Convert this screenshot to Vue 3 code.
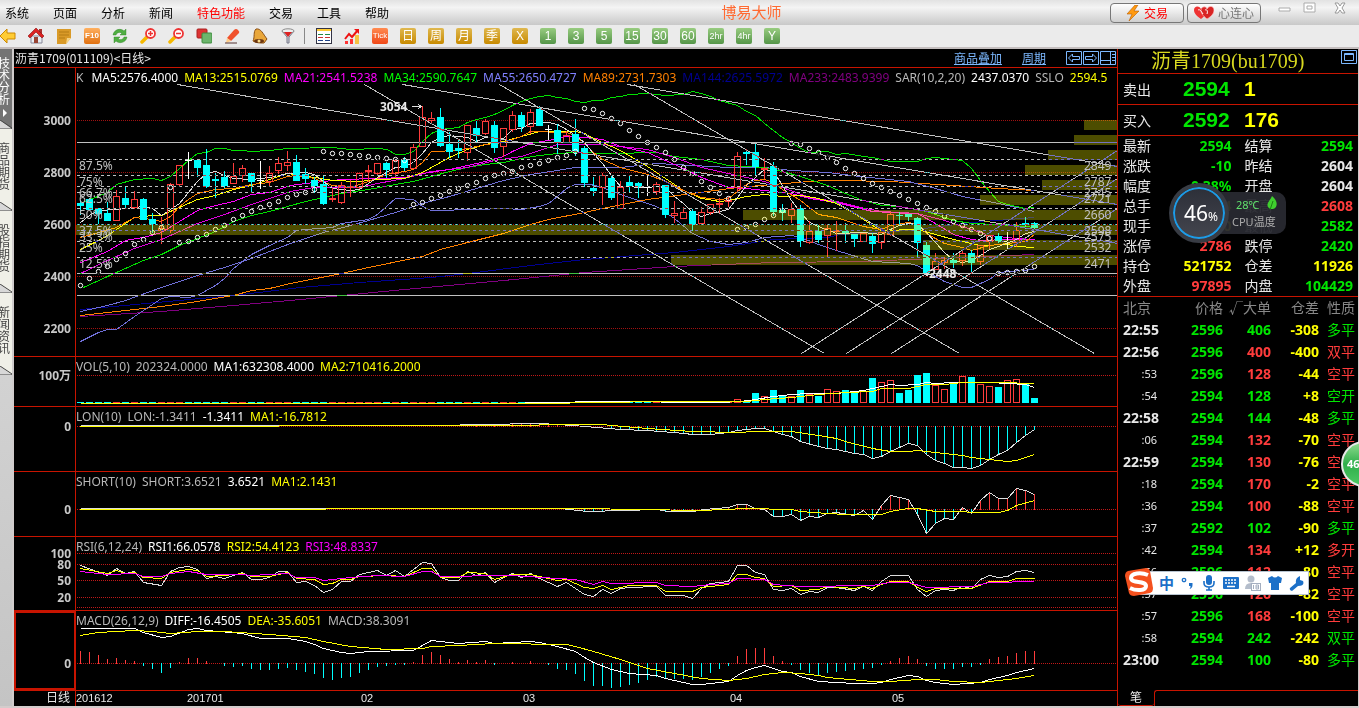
<script setup>
import { ref } from 'vue'

const LEFT = 76
const WIDTH = 1041
const STEP = 9
const xOf = (i) => 80 + i * STEP

const menus = ['系统', '页面', '分析', '新闻', '特色功能', '交易', '工具', '帮助']
const sideTabs = ['技术分析', '商品期货', '股指期货', '新闻资讯']
const activeTab = ref(0)

const periods = [
  { text: 'Tick', kind: 'tick' },
  { text: '日', kind: 'gold' },
  { text: '周', kind: 'gold' },
  { text: '月', kind: 'gold' },
  { text: '季', kind: 'gold' },
  { text: 'X', kind: 'gold' },
  { text: '1', kind: 'green' },
  { text: '3', kind: 'green' },
  { text: '5', kind: 'green' },
  { text: '15', kind: 'green' },
  { text: '30', kind: 'green' },
  { text: '60', kind: 'green' },
  { text: '2hr', kind: 'green hours' },
  { text: '4hr', kind: 'green hours' },
  { text: 'Y', kind: 'green' }
]

const legend = [
  ['K', 'gray'],
  ['MA5:2576.4000', 'white'],
  ['MA13:2515.0769', 'yellow'],
  ['MA21:2541.5238', 'magenta'],
  ['MA34:2590.7647', 'lime'],
  ['MA55:2650.4727', 'violet'],
  ['MA89:2731.7303', 'orange'],
  ['MA144:2625.5972', 'navy'],
  ['MA233:2483.9399', 'purple'],
  ['SAR(10,2,20)', 'gray'],
  ['2437.0370', 'white'],
  ['SSLO', 'gray'],
  ['2594.5', 'yellow']
]

// type, high, body top, body bottom, low
const candles = `c200,203,205,214 c198,199,209,209 c208,208,213,223 c202,213,220,220 r190,196,220,220 c187,198,204,208
r191,199,207,208 c198,199,219,219 c213,219,223,232 r217,228,230,243 r183,184,230,232 r165,165,184,186
w152,160,160,178 c160,160,167,176 c149,165,186,187 c173,179,180,197 c171,177,185,187 r163,176,183,183
r165,168,175,181 c173,173,181,192 w161,180,180,188 r166,173,181,186 r157,163,170,173 r151,162,165,170
c155,162,180,180 c168,174,178,183 c177,180,185,192 c176,184,203,204 r188,198,199,201 r182,185,202,203
r180,186,187,196 r173,173,187,188 r165,170,171,181 r163,163,173,175 c162,163,169,177 r160,160,173,177
c157,160,167,170 r144,147,168,168 r106,117,146,146 r112,118,120,123 c108,117,145,146 c132,144,151,157
c139,148,150,157 r125,125,152,160 c121,128,135,141 r119,121,133,134 c121,125,147,152 r128,128,146,156
r111,115,129,131 c112,115,126,131 r109,112,126,133 c106,109,125,125 w125,129,129,139 c124,130,142,153
r131,135,142,142 c119,134,151,155 c146,148,182,186 c177,188,190,195 r173,175,187,204 c176,178,197,199
r181,187,208,208 c175,182,185,191 c182,183,186,197 w176,187,187,195 r182,184,191,194 c185,185,214,217
r201,213,215,222 r207,212,218,218 c209,211,224,230 r207,212,223,223 r204,204,212,214 r198,203,204,212
r197,200,201,206 r152,156,187,192 c149,152,153,164 c144,152,166,174 r158,168,169,178 c162,166,211,215
c204,210,212,220 r203,209,215,222 c205,208,240,246 r221,231,242,243 c225,231,239,242 r224,228,235,257
r221,230,231,250 c223,231,232,242 c234,234,238,246 r233,233,241,241 c233,236,243,252 r232,232,242,248
r212,214,234,235 c212,215,215,223 c214,214,216,220 c217,218,242,256 c242,245,272,273 r253,261,269,269
r257,260,262,268 c253,260,262,267 r249,253,260,265 c250,253,262,273 r245,245,261,264 r235,235,241,248
c233,236,241,242 w232,241,241,249 r222,230,242,246 c217,223,224,228 c222,223,227,229`
  .split(/\s+/)
  .map((s, i) => {
    const [high, top, bottom, low] = s.slice(1).split(',').map(Number)
    return { x: xOf(i), type: s[0], high, top, bottom, low }
  })

const sar = [
  285, 278, 271, 266, 259, 253, 244, 239, 232, 227, 187, 242, 241, 237, 234, 229, 225, 219, 215, 211,
  207, 204, 201, 197, 194, 192, 189, 151, 153, 153, 154, 155, 156, 157, 158, 159, 160, 204, 202, 198,
  195, 191, 188, 185, 182, 178, 175, 173, 171, 167, 165, 163, 160, 157, 155, 151, 108, 109, 113, 118,
  123, 130, 136, 142, 147, 152, 159, 167, 173, 181, 187, 193, 198, 229, 227, 224, 219, 215, 210, 143,
  144, 148, 152, 157, 162, 168, 173, 178, 183, 187, 191, 195, 199, 203, 207, 211, 216, 221, 225, 229,
  233, 238, 273, 272, 271, 270, 266
]

const averages = [
  { color: '#800080', points: '80,316 161,311 233,305 300,299 404,289 503,280 584,272 674,266 773,262 860,261 1034,254' },
  { color: '#000090', points: '80,309 233,295 300,287 359,282 431,277 476,272 530,265 584,259 674,252 728,246 773,239 827,237 840,234 908,230 971,222 1034,217' },
  { color: '#ff8000', points: '80,315 161,306 197,301 233,295 251,290 269,288 290,283 341,273 368,267 422,256 440,249 467,242 503,233 530,224 548,219 584,212 602,208 647,199 692,193 737,187 773,184 809,181 827,180 840,180 890,181 953,185 998,188 1034,190' },
  { color: '#7070d8', points: '80,311 107,305 125,300 161,287 197,275 224,267 251,258 290,243 323,232 350,225 368,220 395,212 422,203 449,196 476,188 503,180 530,174 557,170 575,167 620,167 656,163 674,164 728,167 764,167 791,170 827,172 860,176 908,181 935,188 962,196 998,203 1034,211' },
  { color: '#7070d8', points: '80,341 98,332 107,329 116,329 134,316 161,298 170,296 188,297 197,295 206,290 215,285 224,278 233,268 251,254 269,245 287,237 296,230 305,229 332,227 341,223 368,219 377,214 395,198 413,199 422,206 431,210 449,210 458,209 476,209 503,208 521,209 539,206 548,203 557,196 566,188 575,184 590,184 602,187 620,194 656,206 674,218 692,233 710,241 728,244 746,242 764,237 791,235 800,237 818,244 836,250 872,261 908,263 917,265 926,271 944,281 962,287 971,287 989,279 998,272 1034,269' },
  { color: '#00e000', points: '80,203 107,192 116,184 134,179 152,178 161,180 170,176 179,168 188,160 197,153 206,152 215,148 224,148 233,150 242,150 251,151 269,150 287,148 332,147 350,149 377,148 387,149 395,154 404,154 413,151 422,141 431,133 440,129 458,127 467,122 476,119 485,117 494,114 503,110 512,105 521,101 530,98 539,96 548,95 557,97 566,98 575,101 584,102 593,100 602,100 611,97 620,96 629,94 647,93 665,95 683,94 692,91 701,93 710,96 719,100 737,105 746,111 755,115 764,123 773,130 782,137 791,142 800,148 809,152 827,151 836,154 845,153 863,156 872,157 890,161 917,161 926,158 935,157 953,159 962,160 971,168 980,180 989,191 998,201 1007,204 1016,206 1025,208 1034,207' },
  { color: '#00e000', points: '83,287 107,276 125,268 143,260 161,254 179,245 197,238 215,231 233,221 251,215 269,211 287,206 305,201 323,197 341,193 368,189 395,184 413,181 431,176 449,171 467,167 485,164 503,162 521,158 539,155 557,153 575,152 611,153 656,152 674,156 701,159 728,165 746,166 764,167 782,171 800,176 827,185 845,193 860,199 881,205 899,206 926,211 953,220 971,223 998,224 1025,226 1034,227' },
  { color: '#e000e0', points: '80,273 107,260 134,248 161,239 179,231 197,223 224,214 251,204 269,198 290,191 314,187 359,187 377,183 404,178 431,171 467,167 494,160 521,156 539,150 557,144 602,144 647,149 674,157 701,167 728,173 746,177 764,181 782,187 809,197 836,201 860,207 881,211 917,213 944,220 971,229 989,235 1016,238 1034,239' },
  { color: '#ff00ff', points: '80,262 107,251 125,240 143,237 161,232 179,221 197,210 215,205 233,201 251,194 269,192 290,185 314,182 341,179 377,178 404,177 422,173 449,169 467,165 485,161 503,156 512,151 530,143 548,140 566,136 584,137 602,139 620,146 647,152 665,160 683,168 701,177 728,187 746,188 773,191 791,193 809,198 836,202 872,211 908,213 917,213 935,223 953,234 971,239 980,240 1007,239 1034,239' },
  { color: '#ffff00', points: '80,249 98,240 107,235 125,223 134,217 152,215 161,215 179,207 197,199 215,195 233,189 251,185 269,179 287,173 314,177 332,180 359,181 377,179 404,178 422,172 431,167 449,157 467,149 485,144 503,141 521,136 539,131 575,131 584,133 593,138 602,142 620,150 647,166 665,178 683,190 701,198 719,201 728,200 746,196 764,194 782,196 800,195 818,198 836,203 854,213 872,225 881,230 917,229 935,234 953,239 971,243 980,245 1007,244 1016,246 1034,247' },
  { color: '#ff8000', points: '80,237 98,232 116,227 134,217 152,219 161,221 170,216 179,206 188,199 197,193 215,189 233,188 251,184 269,182 287,176 296,175 314,178 332,185 350,187 368,181 386,174 404,171 413,169 422,162 431,151 458,150 467,148 485,144 503,142 521,136 530,131 566,132 575,135 584,143 593,152 602,159 620,167 647,174 665,181 683,190 701,197 719,199 728,198 737,191 746,184 755,180 764,179 773,182 782,189 800,200 818,214 836,217 863,226 881,229 890,225 908,222 917,224 926,233 944,243 962,247 971,250 989,245 1007,243 1025,241 1034,234' },
  { color: '#dddddd', points: '80,222 89,215 98,210 116,209 134,207 143,206 152,208 161,215 170,209 179,203 188,192 197,181 206,173 215,171 224,175 233,178 251,179 269,177 287,173 305,172 314,174 323,181 332,188 341,189 350,190 359,189 368,183 377,177 386,172 395,167 404,166 413,162 422,153 431,142 440,137 449,135 467,137 476,141 485,137 503,138 512,129 521,128 530,123 548,122 557,124 566,129 575,135 584,142 593,153 602,163 611,175 620,186 647,187 656,186 665,187 674,196 683,203 692,212 701,216 710,213 728,209 737,197 746,185 755,177 764,169 773,171 782,185 791,200 800,212 809,222 818,226 836,233 863,232 881,234 890,229 899,225 908,223 917,224 926,232 935,242 944,252 953,260 962,262 971,260 980,255 989,249 998,246 1016,239 1025,233 1034,231' }
]

// volume-by-price bands: left edge, top
const bands = [
  [1084, 120], [1074, 135], [1048, 150], [1025, 165], [1042, 180],
  [980, 195], [743, 210], [76, 225], [923, 240], [671, 255]
]

const levels = [
  [159, '87.5%', '2849'],
  [175, '75%', '2787'],
  [186, '66.7%', '2745'],
  [192, '62.5%', '2721'],
  [208, '50%', '2660'],
  [224, '37.5%', '2598'],
  [230, '33.3%', '2575'],
  [241, '25%', '2532'],
  [257, '12.5%', '2471']
]

const trendLines = [
  [177, 84, 1117, 243], [402, 84, 1117, 204], [627, 84, 1117, 166],
  [364, 84, 824, 353], [499, 84, 959, 353], [634, 84, 1094, 353],
  [801, 353, 1117, 150], [846, 353, 1117, 178], [891, 353, 1117, 208]
]

const priceTicks = [3000, 2800, 2600, 2400, 2200].map((v, i) => ({ text: v, y: 120 + i * 52 }))

const toPairs = (points) => points.split(' ').map((p) => p.split(',').map(Number))

function yAt(pairs, x) {
  const k = pairs.findIndex((p) => p[0] >= x)
  if (k <= 0) return pairs[0][1]
  const [x0, y0] = pairs[k - 1]
  const [x1, y1] = pairs[k]
  return Math.round(y0 + ((y1 - y0) * (x - x0)) / (x1 - x0))
}

function sticks(points, zero) {
  const pairs = toPairs(points)
  return candles
    .map(({ x }) => ({ x, y: yAt(pairs, x), zero }))
    .filter((s) => Math.abs(s.y - zero) > 1)
}

const volumeTops = [
  399, 401, 393, 396, 390, 395, 396, 390, 394, 396, 389, 391, 390, 392, 391, 378, 382,
  380, 393, 390, 375, 373, 385, 389, 383, 376, 377, 384, 386, 387, 380, 379, 384, 398
]
const volumeBars = candles.map((c, i) => ({
  x: c.x,
  up: i === 103 || c.type === 'r',
  top: i < 73 ? 402 : volumeTops[i - 73]
}))

const lon = '80,425 440,425 480,424 540,423 573,425 620,429 647,430 673,432 693,434 710,434 728,432 737,430 755,428 764,428 773,431 782,434 791,436 800,441 818,446 827,448 836,449 854,453 863,454 872,458 881,456 890,451 908,443 917,445 926,454 935,460 944,463 953,467 962,467 971,468 980,465 989,459 998,454 1007,450 1016,442 1025,435 1034,429'
const short = '80,508 560,508 587,511 657,509 667,511 693,511 703,509 728,507 737,504 746,504 755,508 764,509 773,516 782,516 791,514 800,520 809,516 818,517 827,513 836,512 854,515 863,510 872,519 881,505 890,495 908,499 917,514 926,533 935,523 944,518 953,519 962,507 971,513 980,500 989,492 998,498 1007,498 1016,488 1025,490 1034,494'

const macdBars = [
  12, 11, 8, 4, 5, 3, 2, -2, -5, -9, -4, 1, 5, 5, 2, 0, -2, -3, -2, -5, -6, -6, -5, -4, -6, -8, -10,
  -14, -16, -14, -13, -9, -6, -3, -2, -1, -1, 1, 8, 11, 8, 4, 1, 3, 1, 3, -1, 0, 1, 0, 2, 0, -1, -5,
  -6, -10, -17, -22, -22, -24, -23, -21, -19, -16, -13, -15, -15, -15, -16, -13, -9, -5, -2, 7, 14,
  15, 15, 7, 2, -1, -6, -9, -11, -9, -8, -7, -6, -5, -4, -1, 2, 5, 7, 4, -2, -5, -5, -5, -3, -3, -1,
  4, 6, 7, 10, 12, 12
]

const panes = [
  {
    name: 'VOL',
    top: 357,
    height: 49,
    legend: [['VOL(5,10)', 'gray'], ['202324.0000', 'gray'], ['MA1:632308.4000', 'white'], ['MA2:710416.2000', 'yellow']],
    ticks: [{ text: '100万', y: 375 }],
    grid: [375],
    bars: volumeBars,
    sticks: [],
    lines: [
      { color: '#fff', points: '80,403 500,403 600,401 720,402 740,401 755,399 773,396 791,394 809,393 836,393 863,390 881,386 890,384 899,385 917,384 926,382 935,383 953,382 989,382 1007,383 1025,384 1034,387' },
      { color: '#ff0', points: '80,403 540,403 660,401 746,401 764,399 791,397 818,394 845,392 872,391 881,388 908,388 926,384 944,384 962,382 998,382 1034,383' }
    ]
  },
  {
    name: 'LON',
    top: 407,
    height: 64,
    legend: [['LON(10)', 'gray'], ['LON:-1.3411', 'gray'], ['-1.3411', 'white'], ['MA1:-16.7812', 'yellow']],
    ticks: [{ text: '0', y: 426 }],
    grid: [426],
    bars: [],
    sticks: sticks(lon, 426),
    lines: [
      { color: '#ddd', points: lon },
      { color: '#ff0', points: '80,426 480,425 600,424 647,428 692,431 737,432 755,431 791,431 818,435 836,438 845,441 872,448 890,451 908,451 917,450 935,452 962,455 971,457 998,460 1007,461 1016,460 1034,454' }
    ]
  },
  {
    name: 'SHORT',
    top: 472,
    height: 64,
    legend: [['SHORT(10)', 'gray'], ['SHORT:3.6521', 'gray'], ['3.6521', 'white'], ['MA1:2.1431', 'yellow']],
    ticks: [{ text: '0', y: 509 }],
    grid: [509],
    bars: [],
    sticks: sticks(short, 509),
    lines: [
      { color: '#ddd', points: short },
      { color: '#ff0', points: '80,509 580,508 700,510 746,508 791,509 800,511 827,513 845,514 881,514 890,511 908,508 917,508 935,511 962,511 971,512 998,512 1007,510 1016,505 1034,500' }
    ]
  },
  {
    name: 'RSI',
    top: 537,
    height: 73,
    legend: [['RSI(6,12,24)', 'gray'], ['RSI1:66.0578', 'white'], ['RSI2:54.4123', 'yellow'], ['RSI3:48.8337', 'magenta']],
    ticks: [{ text: '100', y: 553 }, { text: '80', y: 564 }, { text: '50', y: 580 }, { text: '20', y: 597 }],
    grid: [553, 564, 580, 597, 607],
    bars: [],
    sticks: [],
    lines: [
      { color: '#ddd', points: '80,565 107,575 116,568 125,573 134,571 143,582 161,585 170,571 179,567 188,566 197,569 206,578 215,576 224,578 242,572 251,579 260,579 269,577 278,571 287,571 296,582 305,581 314,585 323,592 332,589 341,581 350,581 359,574 377,570 386,575 395,570 404,576 413,569 422,562 431,563 440,577 449,580 458,580 467,571 476,575 485,572 494,582 503,577 512,573 521,577 530,573 539,578 557,586 566,582 575,588 584,594 593,596 602,589 611,593 620,588 629,587 656,586 665,595 683,595 692,598 701,588 710,583 728,581 737,565 746,565 755,572 764,574 773,589 782,590 791,588 800,594 809,591 818,592 827,587 836,587 854,590 863,586 872,590 881,581 890,575 908,575 917,589 926,596 935,590 944,589 953,590 962,586 971,588 980,579 989,575 998,577 1007,576 1016,571 1025,570 1034,572' },
      { color: '#ff0', points: '80,568 107,573 116,570 125,573 134,572 143,577 161,578 170,572 188,569 197,570 206,576 224,575 242,573 251,576 269,576 287,572 296,578 314,579 323,584 332,583 341,579 350,579 359,576 386,575 404,576 422,568 431,568 440,577 458,577 467,572 485,573 494,579 512,574 530,574 557,580 566,579 584,587 593,588 602,585 611,589 629,585 656,585 665,591 692,591 701,587 728,584 737,574 746,574 755,577 764,578 773,586 791,585 800,590 818,589 827,586 854,588 863,586 872,588 881,584 890,581 908,581 917,587 926,591 935,588 971,588 989,581 1007,581 1016,578 1034,578' },
      { color: '#f0f', points: '80,571 107,574 134,573 143,576 161,576 170,573 188,571 206,574 242,574 251,575 287,573 296,577 314,577 323,580 350,577 377,575 404,576 422,571 431,571 440,576 458,576 485,575 512,575 557,578 575,579 593,584 602,581 611,583 656,582 665,585 692,586 710,584 728,583 737,578 764,579 773,584 800,586 872,585 890,582 908,582 926,587 971,586 989,582 1034,581' }
    ]
  },
  {
    name: 'MACD',
    top: 611,
    height: 79,
    selected: true,
    legend: [['MACD(26,12,9)', 'gray'], ['DIFF:-16.4505', 'white'], ['DEA:-35.6051', 'yellow'], ['MACD:38.3091', 'gray']],
    ticks: [{ text: '0', y: 663 }],
    grid: [663],
    bars: [],
    sticks: macdBars.map((v, i) => ({ x: xOf(i), y: 663 - v, zero: 663 })).filter((s) => s.y !== 663),
    lines: [
      { color: '#fff', points: '80,628 134,628 143,632 161,637 170,636 188,629 197,628 206,630 242,633 260,638 287,638 305,641 314,644 323,648 341,652 350,653 368,651 413,650 422,645 431,640 440,641 458,643 485,641 494,643 530,641 539,642 557,646 575,651 584,657 593,662 611,669 629,673 656,675 665,678 692,684 701,684 728,681 737,675 746,670 755,667 764,665 773,668 782,671 791,672 800,676 818,681 854,683 872,683 881,682 890,679 908,675 917,676 926,680 935,682 953,684 980,682 989,679 1007,675 1016,672 1034,668' },
      { color: '#ff0', points: '80,635 98,632 134,630 152,631 170,633 197,631 224,631 269,634 305,637 323,641 350,646 386,649 422,648 431,646 458,645 494,643 566,644 575,646 593,651 620,659 647,668 674,673 701,678 728,680 746,678 764,674 782,672 800,673 818,675 827,677 872,681 890,681 917,679 935,679 953,681 980,682 1016,678 1034,675' }
    ]
  }
]

const months = [
  { text: '201612', x: 76 },
  { text: '201701', x: 187 },
  { text: '02', x: 361 },
  { text: '03', x: 523 },
  { text: '04', x: 730 },
  { text: '05', x: 892 }
]

const quotes = [
  ['最新', '2594', 'green', '结算', '2594', 'green'],
  ['涨跌', '-10', 'green', '昨结', '2604', 'plain'],
  ['幅度', '-0.38%', 'green', '开盘', '2604', 'plain'],
  ['总手', '202324', 'yellow', '最高', '2608', 'red'],
  ['现手', '100', 'yellow', '最低', '2582', 'green'],
  ['涨停', '2786', 'red', '跌停', '2420', 'green'],
  ['持仓', '521752', 'yellow', '仓差', '11926', 'yellow'],
  ['外盘', '97895', 'red', '内盘', '104429', 'green']
]

const trades = [
  ['22:55', '2596', '406', '-308', '多平', 'green'],
  ['22:56', '2596', '400', '-400', '双平', 'red'],
  [':53', '2596', '128', '-44', '空平', 'red'],
  [':54', '2594', '128', '+8', '空开', 'green'],
  ['22:58', '2594', '144', '-48', '多平', 'green'],
  [':06', '2594', '132', '-70', '空平', 'red'],
  ['22:59', '2594', '130', '-76', '空平', 'red'],
  [':18', '2594', '170', '-2', '空平', 'red'],
  [':36', '2594', '100', '-88', '空平', 'red'],
  [':37', '2592', '102', '-90', '多平', 'green'],
  [':42', '2594', '134', '+12', '多开', 'red'],
  [':56', '2596', '112', '-80', '空平', 'red'],
  [':57', '2596', '126', '-82', '空平', 'red'],
  [':57', '2596', '168', '-100', '空平', 'red'],
  [':58', '2594', '242', '-242', '双平', 'green'],
  ['23:00', '2594', '100', '-80', '多平', 'green']
]

const topStyle = (y, top, height) => ({ top: ((y - top) / height) * 100 + '%' })
const leftStyle = (x) => ({ left: ((x - LEFT) / WIDTH) * 100 + '%' })
</script>

<template>
  <div class="app">
    <header class="menubar">
      <nav class="menu">
        <button v-for="m in menus" :key="m" type="button" :class="{ hot: m === '特色功能' }">{{ m }}</button>
      </nav>
      <h1>博易大师</h1>
      <div class="actions">
        <button type="button" class="pill trade">
          <svg width="14" height="16" viewBox="0 0 14 16"><path d="M9 0 1 9h5L3 16 13 6H8l4-6z" fill="#ff9a10" stroke="#b85c00" stroke-width=".6" /></svg>
          交易
        </button>
        <button type="button" class="pill heart">
          <svg width="20" height="14" viewBox="0 0 20 14">
            <path d="M7 13C1 9 0 6 0 4c0-4 5-5 7-1 2-3 5-2 6 0-1 5-3 8-6 10z" fill="#e33" />
            <path d="M13 13C8 9 7 7 7 4c1-4 5-4 6-1 2-4 7-3 7 1 0 3-2 6-7 9z" fill="#d82424" stroke="#fbb" stroke-width=".7" />
            <path d="M4 4c2-1 3 1 5 4M11 4c2-1 3 1 2 4" fill="none" stroke="#fff" />
          </svg>
          心连心
        </button>
      </div>
      <div class="window-controls">
        <button type="button" aria-label="最小化"><svg width="16" height="16" viewBox="0 0 16 16"><path d="M3 8h11v3H3z" fill="#fff" stroke="#aaa" /></svg></button>
        <button type="button" aria-label="最大化"><svg width="16" height="16" viewBox="0 0 16 16"><path d="M3 3h11v9H3zM6 6h5v3H6z" fill="#fff" stroke="#aaa" /></svg></button>
        <button type="button" aria-label="关闭" class="close"><svg width="16" height="16" viewBox="0 0 16 16"><path d="M3 3h3l2 3 2-3h3l-3 5 3 5h-3l-2-3-2 3H3l3-5z" fill="#fff" stroke="#999" /></svg></button>
      </div>
    </header>

    <div class="toolbar">
      <button type="button" aria-label="后退"><svg viewBox="0 0 16 16"><path d="M0 8 7 1v4h8v6H7v4z" fill="#fc3" stroke="#c80" /></svg></button>
      <button type="button" aria-label="首页"><svg viewBox="0 0 16 16"><path d="M3 8h11v7H3z" fill="#e8eef4" stroke="#889" /><path d="M11 1h3v5h-3z" fill="#a33" /><path d="M0 8 8 0l8 8-2 2-6-6-6 6z" fill="#d22" stroke="#811" stroke-width=".6" /><path d="M6 9h4v6H6z" fill="#943" /></svg></button>
      <button type="button" aria-label="记事"><svg viewBox="0 0 16 16"><path d="M1 1h14v9l-5 6H1z" fill="#d99a28" /><path d="M3 4h10M3 7h10M3 10h6" stroke="#b57c14" /><path d="m10 16 1-6h4z" fill="#f6d588" /></svg></button>
      <button type="button" class="f10">F10</button>
      <button type="button" aria-label="刷新"><svg viewBox="0 0 16 16"><path d="M1 7c1-6 8-7 11-4l2-2v6H8l2-2C8 4 5 4 4 7zM15 9c-1 6-8 7-11 4l-2 2V9h6l-2 2c2 1 5 1 6-2z" fill="#4fae42" stroke="#2b7d22" stroke-width=".4" /></svg></button>
      <button type="button" aria-label="放大"><svg viewBox="0 0 16 16"><path d="m7 9-5 5" stroke="#f5b800" stroke-width="3.500" stroke-linecap="round" /><circle cx="10.500" cy="5.500" r="4.500" fill="#fff" stroke="#e33" stroke-width="1.800" /><path d="M8 5.500h5M10.500 3v5" stroke="#e33" stroke-width="1.500" /></svg></button>
      <button type="button" aria-label="缩小"><svg viewBox="0 0 16 16"><path d="m7 9-5 5" stroke="#f5b800" stroke-width="3.500" stroke-linecap="round" /><circle cx="10.500" cy="5.500" r="4.500" fill="#fff" stroke="#e33" stroke-width="1.800" /><path d="M8 5.500h5" stroke="#e33" stroke-width="1.500" /></svg></button>
      <button type="button" aria-label="叠加"><svg viewBox="0 0 16 16"><rect x="1" y="1" width="10" height="9" rx="1" fill="#d33" stroke="#a22" /><rect x="6" y="5" width="10" height="10" rx="1" fill="#6cb56c" stroke="#3f8a3f" /></svg></button>
      <button type="button" aria-label="画线"><svg viewBox="0 0 16 16"><path d="M3 10 10 2q2-2 4 0t1 3l-8 8z" fill="#f0512c" /><path d="m3 10 4 3-5 2z" fill="#fc8" /><path d="M1 15h12" stroke="#533" /></svg></button>
      <button type="button" aria-label="预警"><svg viewBox="0 0 16 16"><path d="M4 1c5-1 7 5 11 10l-3 4C8 15 4 15 1 13c2-4 0-9 3-12z" fill="#e9a73b" stroke="#8a4d10" /><ellipse cx="7" cy="13" rx="5" ry="2" fill="#6b3510" /><circle cx="7" cy="13" r="1.500" fill="#fd8" /></svg></button>
      <button type="button" aria-label="筛选" class="last"><svg viewBox="0 0 16 16"><path d="M2 3h12L9 9v6H7V9z" fill="#ccd3d8" stroke="#778" /><ellipse cx="8" cy="3" rx="6" ry="2.200" fill="#eee" stroke="#888" /><path d="M4 4h8L8 9z" fill="#d22" /></svg></button>
      <button type="button" aria-label="报价" class="after-rule"><svg viewBox="0 0 16 16"><rect x=".5" y=".5" width="15" height="15" fill="#fff" stroke="#334" /><path d="M1 2h14" stroke="#fc3" stroke-width="2" /><path d="M2 6.500h5M9 6.500h5" stroke="#284" /><path d="M2 9.500h5M9 9.500h5" stroke="#c33" /><path d="M2 12.500h5M9 12.500h5" stroke="#248" /></svg></button>
      <button type="button" aria-label="走势"><svg viewBox="0 0 16 16"><path d="M1 13h3v3H1zM6 11h3v5H6z" fill="#f33" /><path d="M11 7h4v9h-4z" fill="#f5c242" /><path d="m1 11 4-5 3 3 6-7" fill="none" stroke="#e11" stroke-width="2" /><path d="M10 1h5v5z" fill="#e11" /></svg></button>
      <button v-for="p in periods" :key="p.text" type="button" class="period" :class="p.kind"><span>{{ p.text }}</span></button>
    </div>

    <div class="body">
      <aside class="side-tabs">
        <button
          v-for="(t, i) in sideTabs"
          :key="t"
          type="button"
          :class="{ active: i === activeTab }"
          @click="activeTab = i"
        >
          <span>{{ t }}</span>
          <svg v-if="i === activeTab" class="arrow" width="4" height="8" viewBox="0 0 4 8"><path d="M0 0v8l4-4z" fill="#fff" /></svg>
          <svg class="notch" width="12" height="9" viewBox="0 0 12 9"><path d="M0 0v9h12z" fill="#d8d8d8" /><path d="m0 0 12 8v1H0" fill="none" stroke="#444" /></svg>
        </button>
      </aside>

      <main class="charts">
        <div class="chart-title">
          <h2>沥青1709(011109)&lt;日线&gt;</h2>
          <div class="chart-links">
            <a href="#overlay">商品叠加</a>
            <a href="#period">周期</a>
            <span class="arrows">
              <button type="button" aria-label="上一个"><svg viewBox="0 0 16 14"><path d="M.5 .5h15v13H.5zM2.500 7l4-4v2.500h7v3h-7V11z" /></svg></button>
              <button type="button" aria-label="下一个"><svg viewBox="0 0 16 14"><path d="M.5 .5h15v13H.5zM13.500 7l-4-4v2.500h-7v3h7V11z" /></svg></button>
              <button type="button" aria-label="布局"><svg viewBox="0 0 16 14"><path d="M.5 .5h15v13H.5zM.5 9.500h10M10.500 .5v13M12 3.500h3M12 6.500h3M12 9.500h3" /></svg></button>
            </span>
          </div>
        </div>

        <section class="pane">
          <div class="axis">
            <span v-for="t in priceTicks" :key="t.text" :style="topStyle(t.y, 68, 288)">{{ t.text }}</span>
          </div>
          <div class="plot">
            <svg class="drawing" :viewBox="`${LEFT} 68 ${WIDTH} 288`" preserveAspectRatio="xMinYMin meet" shape-rendering="crispEdges">
              <line v-for="t in priceTicks" :key="t.y" x1="77" x2="1116" :y1="t.y + 0.5" :y2="t.y + 0.5" stroke="#a01010" stroke-dasharray="1 1" />
              <g transform="translate(0.5 0.5)" fill="none">
                <polyline v-for="(m, i) in averages" :key="i" :points="m.points" :stroke="m.color" />
              </g>
              <g v-for="c in candles" :key="c.x">
                <template v-if="c.type === 'c'">
                  <rect :x="c.x" :y="c.high" width="1" :height="c.low - c.high + 1" fill="#0ff" />
                  <rect :x="c.x - 3" :y="c.top" width="7" :height="c.bottom - c.top + 1" fill="#0ff" />
                </template>
                <template v-else-if="c.type === 'r'">
                  <rect :x="c.x" :y="c.high" width="1" :height="c.top - c.high" fill="#ff3c3c" />
                  <rect :x="c.x" :y="c.bottom" width="1" :height="c.low - c.bottom + 1" fill="#ff3c3c" />
                  <rect :x="c.x - 2.5" :y="c.top + 0.5" width="6" :height="c.bottom - c.top" fill="none" stroke="#ff3c3c" />
                </template>
                <template v-else>
                  <rect :x="c.x" :y="c.high" width="1" :height="c.low - c.high + 1" fill="#fff" />
                  <rect :x="c.x - 3" :y="c.top" width="7" height="1" fill="#fff" />
                </template>
              </g>
              <g shape-rendering="auto" fill="none" stroke="#fff">
                <circle v-for="(y, i) in sar" :key="i" :cx="xOf(i) + 0.5" :cy="y + 0.5" r="2.200" />
              </g>
              <rect v-for="b in bands" :key="b[1]" :x="b[0]" :y="b[1]" :width="1117 - b[0]" height="10" fill="#ff0" fill-opacity=".3" />
              <g class="overlay-lines" transform="translate(0.5 0.5)" stroke="#c0c0c0">
                <line v-for="y in [142, 273, 295]" :key="y" x1="76" x2="1117" :y1="y" :y2="y" />
                <line v-for="l in levels" :key="l[0]" x1="76" x2="1117" :y1="l[0]" :y2="l[0]" stroke-dasharray="3 3" />
                <line v-for="(l, i) in trendLines" :key="'t' + i" :x1="l[0]" :y1="l[1]" :x2="l[2]" :y2="l[3]" />
              </g>
              <g class="svg-text">
                <template v-for="l in levels" :key="l[0]">
                  <text x="79" :y="l[0] + 11">{{ l[1] }}</text>
                  <text x="1084" :y="l[0] + 11">{{ l[2] }}</text>
                </template>
                <text class="mark" x="380" y="111">3054</text>
                <text class="mark" x="929" y="278">2448</text>
              </g>
              <path d="M411.500 106.500h10M418.500 104.500l3 2-3 2" fill="none" stroke="#ddd" />
              <path d="M925.500 274.500h8M928.500 272.500l-3 2 3 2" fill="none" stroke="#ddd" />
            </svg>
            <p class="legend">
              <span v-for="l in legend" :key="l[0]" :class="l[1]">{{ l[0] }}</span>
            </p>
          </div>
        </section>

        <section v-for="p in panes" :key="p.name" class="pane">
          <div class="axis" :class="{ selected: p.selected }">
            <span v-for="t in p.ticks" :key="t.y" :style="topStyle(t.y, p.top, p.height)">{{ t.text }}</span>
          </div>
          <div class="plot">
            <svg class="drawing" :viewBox="`${LEFT} ${p.top} ${WIDTH} ${p.height}`" preserveAspectRatio="xMinYMin meet" shape-rendering="crispEdges">
              <line v-for="g in p.grid" :key="g" x1="77" x2="1116" :y1="g + 0.5" :y2="g + 0.5" stroke="#c01818" stroke-dasharray="1 1" />
              <template v-for="b in p.bars" :key="b.x">
                <rect v-if="b.up && b.top < 402" :x="b.x - 2.5" :y="b.top + 0.5" width="6" :height="402 - b.top" fill="none" stroke="#ff3c3c" />
                <rect v-else :x="b.x - 3" :y="b.top" width="7" :height="403 - b.top" :fill="b.up ? '#ff3c3c' : '#0ff'" />
              </template>
              <rect
                v-for="s in p.sticks"
                :key="s.x"
                :x="s.x"
                :y="Math.min(s.y, s.zero)"
                width="1"
                :height="Math.abs(s.y - s.zero) + 1"
                :fill="s.y < s.zero ? '#ff3c3c' : '#0ff'"
              />
              <g transform="translate(0.5 0.5)" fill="none">
                <polyline v-for="(l, i) in p.lines" :key="i" :points="l.points" :stroke="l.color" />
              </g>
            </svg>
            <p class="legend small">
              <span v-for="l in p.legend" :key="l[0]" :class="l[1]">{{ l[0] }}</span>
            </p>
          </div>
        </section>

        <div class="dates">
          <div class="axis-name">日线</div>
          <div class="plot">
            <span v-for="m in months" :key="m.text" :style="leftStyle(m.x)">{{ m.text }}</span>
          </div>
        </div>
      </main>

      <aside class="quote">
        <div class="quote-title">
          <h2>沥青1709(bu1709)</h2>
          <button type="button" aria-label="还原"><svg width="16" height="14" viewBox="0 0 16 14"><path d="M.5 .5h15v13H.5zM3.500 3.500h9v7h-9zM3.500 4.500h9" fill="none" stroke="#7cb8ff" /></svg></button>
        </div>
        <div class="level"><span>卖出</span><b class="green">2594</b><b class="yellow">1</b></div>
        <div class="level"><span>买入</span><b class="green">2592</b><b class="yellow">176</b></div>

        <table class="details">
          <tbody>
            <tr v-for="q in quotes" :key="q[0]">
              <th scope="row">{{ q[0] }}</th>
              <td :class="q[2]">{{ q[1] }}</td>
              <th scope="row">{{ q[3] }}</th>
              <td :class="q[5]">{{ q[4] }}</td>
            </tr>
          </tbody>
        </table>

        <table class="trades">
          <thead>
            <tr>
              <th scope="col">北京</th>
              <th scope="col">价格</th>
              <th scope="col">√大单</th>
              <th scope="col">仓差</th>
              <th scope="col">性质</th>
            </tr>
          </thead>
          <tbody>
            <tr v-for="(t, i) in trades" :key="i">
              <td :class="{ seconds: t[0][0] === ':' }">{{ t[0] }}</td>
              <td class="green">{{ t[1] }}</td>
              <td :class="t[5]">{{ t[2] }}</td>
              <td class="yellow">{{ t[3] }}</td>
              <td :class="t[5]">{{ t[4] }}</td>
            </tr>
          </tbody>
        </table>

        <div class="quote-tabs">
          <button type="button">笔</button>
          <i></i>
        </div>
      </aside>
    </div>

    <div class="cpu">
      <div class="cpu-info">
        <div class="temp">28℃
          <svg width="10" height="14" viewBox="0 0 10 14"><path d="M5 0c5 4 6 9 3 12-2 2-6 1-7-1-2-4 2-6 4-11z" fill="#3fcf2e" /><path d="m3 14 3-9" stroke="#1d7d14" /></svg>
        </div>
        <div>CPU温度</div>
      </div>
      <div class="cpu-ring"><span>46<small>%</small></span></div>
    </div>

    <div class="ball">46</div>

    <div class="ime">
      <svg class="ime-logo" width="30" height="30" viewBox="0 0 30 30">
        <path d="M4 4 22 1q3 0 4 3l3 17q0 4-3 5L10 29q-4 0-5-3L1 9q0-4 3-5z" fill="#f4511e" />
        <path d="M24 8C17 5 7 6 7 11c0 6 15 2 15 8 0 5-10 5-16 2" fill="none" stroke="#fff" stroke-width="4" />
      </svg>
      <button type="button" class="lang">中</button>
      <button type="button" aria-label="标点"><svg width="14" height="16" viewBox="0 0 14 16"><circle cx="3" cy="5" r="1.700" fill="none" stroke="#1c70c8" stroke-width="1.300" /><path d="M8 8h3.500v2q0 3-3 4 1-1 1-3H8z" fill="#1c70c8" /></svg></button>
      <button type="button" aria-label="语音"><svg width="14" height="16" viewBox="0 0 14 16"><rect x="4" y="0" width="6" height="10" rx="3" fill="#1c70c8" /><path d="M2 6v2q0 4 5 4t5-4V6M7 12v3M4 15h6" fill="none" stroke="#1c70c8" stroke-width="1.600" /></svg></button>
      <button type="button" aria-label="键盘"><svg width="16" height="12" viewBox="0 0 16 12"><rect width="16" height="12" rx="1" fill="#1c70c8" /><path d="M2 3h12M2 6h12" stroke="#fff" stroke-width="1.500" stroke-dasharray="2 1" /><path d="M4 9.500h8" stroke="#fff" stroke-width="1.500" /></svg></button>
      <button type="button" aria-label="账号"><svg width="16" height="16" viewBox="0 0 16 16"><circle cx="6" cy="4" r="3.500" fill="#b4bdcb" /><path d="M0 14q0-6 6-6t6 6z" fill="#b4bdcb" /><rect x="6.500" y="8.500" width="9" height="7" fill="#fff" stroke="#a5afc0" /><path d="M8.500 10v4M11 10h2.500v4H11zM11 12h3" fill="none" stroke="#a5afc0" /></svg></button>
      <button type="button" aria-label="皮肤"><svg width="14" height="14" viewBox="0 0 14 14"><path d="M4 0q3 3 6 0l4 2-1 5h-2v7H3V7H1L0 2z" fill="#1c70c8" /></svg></button>
      <button type="button" aria-label="工具"><svg width="15" height="15" viewBox="0 0 15 15"><path d="M1 12 7 7Q6 2 11 0l0 4 3 1q2 5-5 5l-6 5q-3-1-2-3z" fill="#1c70c8" /></svg></button>
    </div>
  </div>
</template>

<style>
body {
  margin: 0;
  background: #000;
}
</style>

<style scoped>
.app {
  position: relative;
  display: flex;
  flex-direction: column;
  min-height: 100vh;
  overflow: hidden;
  background: #000;
  color: #e8e8e8;
  font-family: "Noto Sans", "Noto Sans CJK SC", sans-serif;
  font-size: 12px;
}

h1,
h2,
p {
  margin: 0;
  font-weight: normal;
}

button {
  margin: 0;
  padding: 0;
  border: none;
  background: none;
  color: inherit;
  font: inherit;
  cursor: pointer;
}

svg {
  display: block;
}

.menubar {
  display: flex;
  align-items: center;
  height: 25px;
  background: linear-gradient(#e2e2e2, #f4f4f4 30%, #c8c8c8);
  color: #000;
  font-family: "Liberation Sans", "Noto Sans CJK SC", sans-serif;
}

.menu {
  display: flex;
  gap: 24px;
  padding-left: 5px;
}

.menu .hot {
  color: #f00;
}

.menubar h1 {
  margin: 0 auto;
  padding-left: 4px;
  color: #ff6a32;
  font-size: 15px;
  line-height: 24px;
}

.actions {
  display: flex;
  gap: 3px;
}

.pill {
  display: flex;
  align-items: center;
  justify-content: center;
  gap: 4px;
  box-sizing: border-box;
  width: 74px;
  height: 20px;
  border: 1px solid #777;
  border-radius: 4px;
  background: linear-gradient(#fff, #e8e8e8 50%, #cfcfcf);
}

.trade {
  color: #f00;
}

.heart {
  color: #777;
}

.window-controls {
  display: flex;
  gap: 9px;
  align-self: flex-start;
  padding: 0 11px 0 15px;
}

.window-controls .close {
  margin-left: 6px;
}

.toolbar {
  display: flex;
  align-items: center;
  box-sizing: border-box;
  height: 24px;
  border-bottom: 2px solid #c4bebe;
  background: #ebebeb;
}

.toolbar button {
  flex: none;
  width: 16px;
  height: 16px;
  margin-right: 12px;
}

.toolbar .last {
  margin-right: 8px;
}

.toolbar .after-rule {
  box-sizing: content-box;
  padding-left: 11px;
  border-left: 1px solid #888;
}

.toolbar .f10,
.toolbar .period {
  display: flex;
  align-items: center;
  justify-content: center;
  border-radius: 2px;
  color: #fff;
  font-family: "Liberation Sans", "Noto Sans CJK SC", sans-serif;
  font-size: 12px;
  line-height: 16px;
}

.toolbar .f10 {
  background: linear-gradient(#ffb060, #e07010);
  font-size: 8px;
  font-weight: bold;
}

.toolbar .tick {
  background: linear-gradient(#ff8a50, #f04818);
  font-size: 8px;
}

.toolbar .gold {
  background: linear-gradient(#dfb850, #c88a00);
}

.toolbar .green {
  background: linear-gradient(#98cc80, #559548);
}

.toolbar .hours {
  font-size: 9px;
}

.body {
  display: flex;
  flex: 1;
  border-bottom: 2px solid #d4cccc;
}

.side-tabs {
  display: flex;
  flex-direction: column;
  flex: none;
  width: 12px;
  border-right: 2px solid #d0cccc;
  background: linear-gradient(#e0e0e0, #c4c4c4);
}

.side-tabs button {
  position: relative;
  width: 12px;
  height: 82px;
  padding-top: 12px;
  overflow: hidden;
  background: #f0f0e8;
  color: #444;
}

.side-tabs button.active {
  height: 80px;
  padding-top: 4px;
  background: #747474;
  color: #fff;
}

.side-tabs span {
  display: block;
  width: 12px;
  height: 66px;
  margin-left: -2px;
  line-height: 12px;
  word-break: break-all;
}

.side-tabs .arrow {
  position: absolute;
  left: 3px;
  top: 60px;
}

.side-tabs .notch {
  position: absolute;
  left: 0;
  bottom: 0;
}

.charts {
  flex: 1;
  min-width: 0;
  border-right: 1px solid #c81400;
}

.chart-title {
  display: flex;
  justify-content: space-between;
  align-items: center;
  height: 18px;
  padding: 0 1px;
  border-bottom: 1px solid #c81400;
}

.chart-title h2 {
  font-family: "Noto Sans CJK SC", sans-serif;
  font-size: 12px;
  line-height: 18px;
}

.chart-links {
  display: flex;
  align-items: center;
  gap: 20px;
  font-family: "Noto Sans CJK SC", sans-serif;
  line-height: 16px;
}

.chart-links a {
  color: #7cb8ff;
}

.arrows {
  display: flex;
  gap: 1px;
}

.arrows svg {
  width: 16px;
  height: 14px;
  fill: none;
  stroke: #7cb8ff;
}

.pane {
  display: flex;
  border-bottom: 1px solid #c81400;
}

.axis {
  position: relative;
  flex: none;
  width: 61px;
  border-right: 1px solid #c81400;
  color: #c8c8c8;
  font-weight: bold;
}

.axis.selected {
  outline: 2px solid #c81400;
  outline-offset: -2px;
}

.axis span {
  position: absolute;
  right: 4px;
  line-height: 14px;
  margin-top: -6px;
}

.plot {
  position: relative;
  flex: 1;
  min-width: 0;
}

.drawing {
  width: 100%;
  height: auto;
}

.overlay-lines {
  mix-blend-mode: difference;
}

.svg-text {
  fill: #c0c0c0;
  font-size: 12px;
}

.svg-text .mark {
  fill: #e8e8e8;
  font-weight: bold;
}

.legend {
  position: absolute;
  left: 0;
  right: 0;
  top: 1px;
  display: flex;
  gap: 6px;
  overflow: hidden;
  line-height: 17px;
  white-space: nowrap;
}

.legend span:first-child {
  margin-right: 2px;
}

.legend.small span:first-child {
  margin-right: 0;
}

.gray { color: #b8b8b8; }
.white { color: #fff; }
.yellow { color: #ff0; }
.magenta { color: #f0f; }
.lime { color: #0f0; }
.violet { color: #8080ff; }
.orange { color: #ff8000; }
.navy { color: #000090; }
.purple { color: #800080; }
.red { color: #ff3c3c; }
.plain { color: #e8e8e8; }

.quote .green {
  color: #00e600;
}

.dates {
  display: flex;
  height: 15px;
  font-family: "Liberation Sans", "Noto Sans CJK SC", sans-serif;
  font-size: 11px;
  line-height: 15px;
}

.axis-name {
  box-sizing: border-box;
  width: 62px;
  padding-right: 5px;
  border-right: 1px solid #c81400;
  font-size: 12px;
  text-align: right;
}

.dates .plot span {
  position: absolute;
}

.quote {
  display: flex;
  flex-direction: column;
  flex: none;
  width: 240px;
  border-right: 1px solid #d0c8c8;
}

.quote-title {
  display: flex;
  align-items: flex-start;
  justify-content: space-between;
  height: 24px;
  padding: 0 1px 0 33px;
  border-bottom: 1px solid #c81400;
}

.quote-title h2 {
  color: #d8d820;
  font-family: "Liberation Serif", "Noto Sans CJK SC", serif;
  font-size: 20px;
  line-height: 24px;
}

.quote-title button {
  margin-top: 1px;
}

.level {
  display: flex;
  align-items: center;
  height: 30px;
  padding-left: 5px;
  border-bottom: 1px solid #c81400;
  font-size: 14px;
}

.level span {
  width: 60px;
}

.level b {
  width: 61px;
  font-family: "Liberation Sans", sans-serif;
  font-size: 21px;
}

table {
  width: 100%;
  border-collapse: collapse;
  table-layout: fixed;
  font-size: 14px;
}

th,
td {
  padding: 0;
  font-weight: normal;
}

.details {
  border-bottom: 1px solid #c81400;
}

.details tr {
  height: 20px;
  line-height: 20px;
}

.details th {
  width: 37px;
  padding-left: 5px;
  text-align: left;
}

.details td {
  font-weight: bold;
  text-align: right;
}

.details th + td {
  padding-right: 5px;
}

.details td + th {
  padding-left: 8px;
}

.trades tr {
  height: 22px;
  line-height: 22px;
}

.trades th {
  color: #888;
  text-align: right;
}

.trades th:first-child {
  width: 36px;
  padding-left: 5px;
  text-align: left;
}

.trades th:nth-child(2) {
  width: 64px;
}

.trades th:nth-child(3),
.trades th:nth-child(4) {
  width: 48px;
}

.trades td {
  font-weight: bold;
  text-align: right;
}

.trades td:first-child {
  padding-left: 5px;
  text-align: left;
}

.trades td.seconds {
  padding-right: 2px;
  font-size: 11px;
  font-weight: normal;
  text-align: right;
}

.trades th:last-child,
.trades td:last-child {
  padding-right: 3px;
  font-weight: normal;
}

.quote-tabs {
  display: flex;
  height: 16px;
  margin-top: auto;
}

.quote-tabs button {
  width: 36px;
  border-bottom: 1px solid #c81400;
  border-radius: 0 0 3px 3px;
  line-height: 15px;
}

.quote-tabs i {
  flex: 1;
  border-top: 1px solid #c81400;
  border-left: 1px solid #c81400;
  border-radius: 3px 0 0 0;
}

.cpu {
  position: absolute;
  right: 73px;
  top: 183px;
  display: flex;
  align-items: center;
  width: 117px;
  height: 60px;
}

.cpu-ring {
  position: absolute;
  left: 0;
  display: flex;
  align-items: center;
  justify-content: center;
  box-sizing: border-box;
  width: 60px;
  height: 60px;
  padding-left: 4px;
  border: 4px solid #383c44;
  border-radius: 50%;
  background: linear-gradient(#2c2f38, #44464f);
  box-shadow: inset 0 0 0 2px #1c9ce8;
  color: #fff;
}

.cpu-ring span {
  font-size: 21px;
}

.cpu-ring small {
  font-size: 12px;
}

.cpu-info {
  box-sizing: border-box;
  width: 87px;
  height: 42px;
  margin-left: auto;
  padding: 4px 0 0 33px;
  border-radius: 4px 10px 10px 4px;
  background: rgba(40, 41, 48, 0.95);
  color: #aaa;
  font-size: 11px;
  line-height: 17px;
}

.cpu-info .temp {
  display: flex;
  gap: 7px;
  padding-left: 4px;
  color: #5fe06c;
}

.ball {
  position: absolute;
  right: -28px;
  top: 441px;
  box-sizing: border-box;
  width: 46px;
  height: 46px;
  padding-left: 4px;
  border: 2px solid #e8e8e8;
  border-radius: 50%;
  background: linear-gradient(#8fdc8f, #2fae4a 50%, #4cc964);
  color: #fff;
  font-size: 11px;
  font-weight: bold;
  line-height: 42px;
}

.ime {
  position: absolute;
  right: 50px;
  top: 571px;
  display: flex;
  align-items: center;
  justify-content: space-between;
  box-sizing: border-box;
  width: 170px;
  height: 24px;
  padding: 0 4px 0 19px;
  border: 1px solid #b8c4d0;
  background: #fff;
}

.ime-logo {
  position: absolute;
  left: -16px;
  top: -5px;
}

.ime .lang {
  color: #1c70c8;
  font-family: "Noto Sans CJK SC", sans-serif;
  font-size: 15px;
  font-weight: bold;
  line-height: 22px;
}
</style>
